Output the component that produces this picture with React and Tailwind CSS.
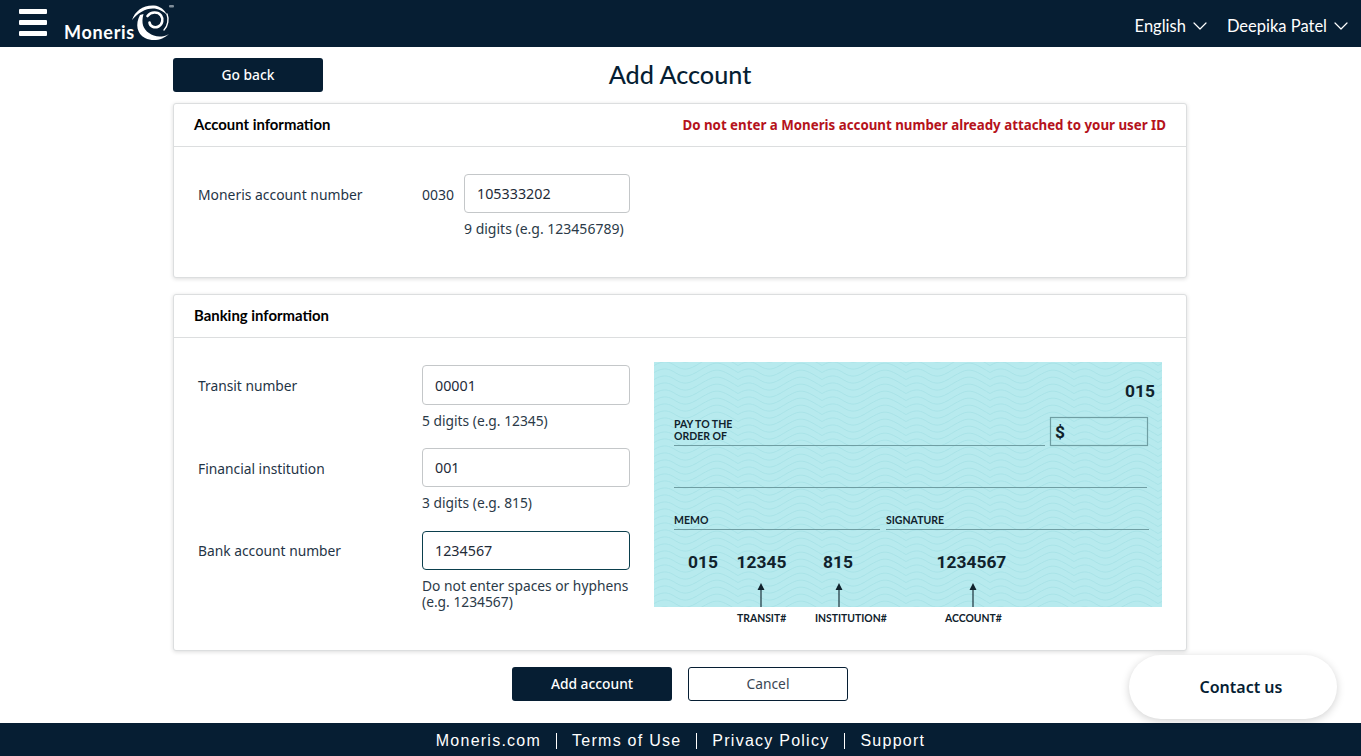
import React from "react";
import { ChevronDown } from "lucide-react";

function Logo() {
  return (
    <div className="relative h-[47px] w-[110px]">
      <span className="absolute left-[-1px] top-[19px] text-[18px] leading-[26px] font-bold tracking-[0.7px] text-white font-['Lato',sans-serif]">Moneris</span>
      <svg className="absolute left-[65px] top-[4px]" width="44" height="40" viewBox="0 0 44 40" fill="none">
        <path d="M2 16C5 7 13 1 24 1.500C30 2 35 6 37 11C33 7 28 4.500 23 4.500C15 4.500 8 9 2 16Z" fill="#fff" />
        <path d="M10 11C5 20 7 30 15 34C23 38 33 36 39 30C32 34 24 33 19 29C13 25 11 19 13.500 10Z" fill="#fff" />
        <path d="M37 10C39 15 38 22 34 26" stroke="#fff" strokeWidth="1.400" strokeLinecap="round" />
        <path d="M17.500 12C21 7.500 28 7.500 31 11.500C33.500 15 32.500 20.500 28.500 22.500C24.500 24.500 20 22.500 19.500 18.500" stroke="#fff" strokeWidth="2.600" strokeLinecap="round" />
        <rect x="39" y="1" width="5" height="2.500" rx="1" fill="#7f8d99" />
      </svg>
    </div>
  );
}

function Field({ value, width = "w-[208px]", dark = false, height = "h-[39px]" }) {
  return (
    <input
      readOnly
      value={value}
      className={`${width} ${height} rounded-[4px] border ${dark ? "border-[#0b3f4d]" : "border-[#c4c7c9]"} bg-white px-[12px] text-[14.3px] text-[#1f2b38] outline-none font-['Noto_Sans',sans-serif]`}
    />
  );
}

function Card({ title, right, children, className }) {
  return (
    <section className={`w-[1014px] rounded-[3px] border border-[#dcdedf] bg-white shadow-[0_1px_4px_rgba(0,0,0,0.14)] ${className}`}>
      <header className="flex h-[43px] items-center justify-between border-b border-[#dcdedf] px-[20px]">
        <h2 className="mt-[-2px] text-[14.9px] font-bold text-black font-['Lato',sans-serif]">{title}</h2>
        {right}
      </header>
      {children}
    </section>
  );
}

function Cheque() {
  const digits = "'Roboto', sans-serif";
  const lato = "'Lato', sans-serif";
  const ink = "#10222c";
  const line = "#6f9ea3";
  const offsets = [-21, -14, -7, 0, 7, 14, 21];
  return (
    <svg width="508" height="268" viewBox="0 0 508 268" className="block">
      <defs>
        <pattern id="waves" width="84" height="7" patternUnits="userSpaceOnUse">
          {offsets.map((o) => (
            <path key={o} d={`M0 ${o + 3.5}C21 ${o - 9} 21 ${o + 16} 42 ${o + 3.5}S63 ${o - 9} 84 ${o + 3.5}`} fill="none" stroke="#a7e2e7" strokeWidth="0.9" />
          ))}
        </pattern>
      </defs>
      <rect width="508" height="245" fill="#b7eaee" />
      <rect width="508" height="245" fill="url(#waves)" />
      <g fill={ink} fontFamily={digits} fontWeight="700" fontSize="17.400">
        <text x="471" y="35">015</text>
        <text x="401" y="76">$</text>
        <text x="34" y="206">015</text>
        <text x="82.500" y="206">12345</text>
        <text x="169" y="206">815</text>
        <text x="282.500" y="206">1234567</text>
      </g>
      <g fill={ink} fontFamily={lato} fontWeight="700" fontSize="10.500">
        <text x="20" y="66">PAY TO THE</text>
        <text x="20" y="78">ORDER OF</text>
        <text x="20" y="162">MEMO</text>
        <text x="232" y="162">SIGNATURE</text>
      </g>
      <g stroke={line} strokeWidth="1.200" fill="none">
        <path d="M20 83.500H391M20 125.500H493M20 167.500H226M232 167.500H495" />
        <rect x="396.500" y="55.500" width="97" height="28" />
      </g>
      <g stroke={ink} strokeWidth="1.100">
        <path d="M107 245V224M185 245V224M319 245V224" />
      </g>
      <g fill={ink}>
        <path d="M107 221L103.500 228H110.500ZM185 221L181.500 228H188.500ZM319 221L315.500 228H322.500Z" />
      </g>
      <g fill={ink} fontFamily={lato} fontWeight="700" fontSize="10.400">
        <text x="83" y="260">TRANSIT#</text>
        <text x="161" y="260">INSTITUTION#</text>
        <text x="291" y="260">ACCOUNT#</text>
      </g>
    </svg>
  );
}

function Hint({ children, className = "" }) {
  return <p className={`whitespace-nowrap text-[13.800px] leading-[16px] text-[#2b3a48] ${className}`}>{children}</p>;
}

function Row({ label, value, hint, dark, height, labelTop = "pt-[11px]", className = "" }) {
  return (
    <div className={`flex ${className}`}>
      <label className={`w-[224px] ${labelTop} text-[13.800px] leading-[20px] text-[#1f3446]`}>{label}</label>
      <div className="w-[208px]">
        <Field value={value} dark={dark} height={height} />
        <Hint className="mt-[8px]">{hint}</Hint>
      </div>
    </div>
  );
}

export default function App() {
  return (
    <div className="relative flex h-[756px] w-full flex-col overflow-hidden bg-white font-['Noto_Sans',sans-serif]">
      <header className="flex h-[47px] shrink-0 items-center justify-between bg-[#061e33] pl-[19px] pr-[8px]">
        <div className="flex items-center">
          <div className="mt-[-2px] flex w-[28px] flex-col gap-[6px]">
            <span className="h-[5px] rounded-[1px] bg-white" />
            <span className="h-[5px] rounded-[1px] bg-white" />
            <span className="h-[5px] rounded-[1px] bg-white" />
          </div>
          <div className="ml-[18px]"><Logo /></div>
        </div>
        <nav className="mt-[5px] flex items-center text-[16.500px] text-white font-['Lato',sans-serif]">
          <span>English</span>
          <ChevronDown size={24} strokeWidth={1.200} className="ml-[2px]" />
          <span className="ml-[15px]">Deepika Patel</span>
          <ChevronDown size={24} strokeWidth={1.200} className="ml-[2px]" />
        </nav>
      </header>

      <main className="flex flex-1 flex-col items-start pl-[173px]">
        <div className="relative mt-[11px] flex h-[34px] w-[1014px] items-center justify-center">
          <button className="absolute left-0 top-0 h-[34px] w-[150px] rounded-[3px] bg-[#061e33] text-[13.800px] font-medium text-white">Go back</button>
          <h1 className="text-[25.200px] font-medium text-[#061e33] font-['Lato',sans-serif]">Add Account</h1>
        </div>

        <Card
          className="mt-[11px] h-[175px]"
          title="Account information"
          right={<span className="mt-[1px] text-[13.300px] font-bold text-[#b5121b]">Do not enter a Moneris account number already attached to your user ID</span>}
        >
          <div className="flex pl-[24px] pt-[27px]">
            <label className="w-[224px] pt-[11px] text-[13.900px] leading-[20px] text-[#1f3446]">Moneris account number</label>
            <span className="w-[42px] pt-[11px] text-[14px] leading-[20px] text-[#1f3446]">0030</span>
            <div>
              <Field value="105333202" width="w-[166px]" />
              <Hint className="mt-[8px] text-[14px]">9 digits (e.g. 123456789)</Hint>
            </div>
          </div>
        </Card>

        <Card className="mt-[16px] h-[357px]" title="Banking information">
          <div className="flex pl-[24px] pt-[27px]">
            <div className="w-[432px]">
              <Row label="Transit number" value="00001" height="h-[40px]" hint="5 digits (e.g. 12345)" />
              <Row className="mt-[19px]" label="Financial institution" value="001" hint="3 digits (e.g. 815)" />
              <Row
                className="mt-[20px]"
                labelTop="pt-[10px]"
                label="Bank account number"
                value="1234567"
                dark
                hint={<>Do not enter spaces or hyphens<br />(e.g. 1234567)</>}
              />
            </div>
            <div className="ml-[24px] mt-[-3px] flex flex-col">
              <Cheque />
            </div>
          </div>
        </Card>

        <div className="ml-[339px] mt-[16px] flex gap-[16px]">
          <button className="h-[34px] w-[160px] rounded-[3px] bg-[#061e33] text-[13.800px] font-medium text-white">Add account</button>
          <button className="h-[34px] w-[160px] rounded-[3px] border border-[#061e33] bg-white text-[13.800px] text-[#3a4754]">Cancel</button>
        </div>
      </main>

      <button className="absolute left-[1129px] top-[655px] h-[64px] w-[208px] rounded-[32px] bg-white pl-[16px] text-[16px] font-semibold text-[#061e33] shadow-[0_2px_8px_rgba(0,0,0,0.18)]">Contact us</button>

      <footer className="flex h-[33px] shrink-0 items-center justify-center bg-[#061e33] pt-[2px] text-[16px] tracking-[1.250px] text-white font-['Liberation_Sans',sans-serif]">
        <span>Moneris.com</span>
        <span className="mx-[15px] h-[16px] w-px bg-white" />
        <span>Terms of Use</span>
        <span className="mx-[15px] h-[16px] w-px bg-white" />
        <span>Privacy Policy</span>
        <span className="mx-[15px] h-[16px] w-px bg-white" />
        <span>Support</span>
      </footer>
    </div>
  );
}
